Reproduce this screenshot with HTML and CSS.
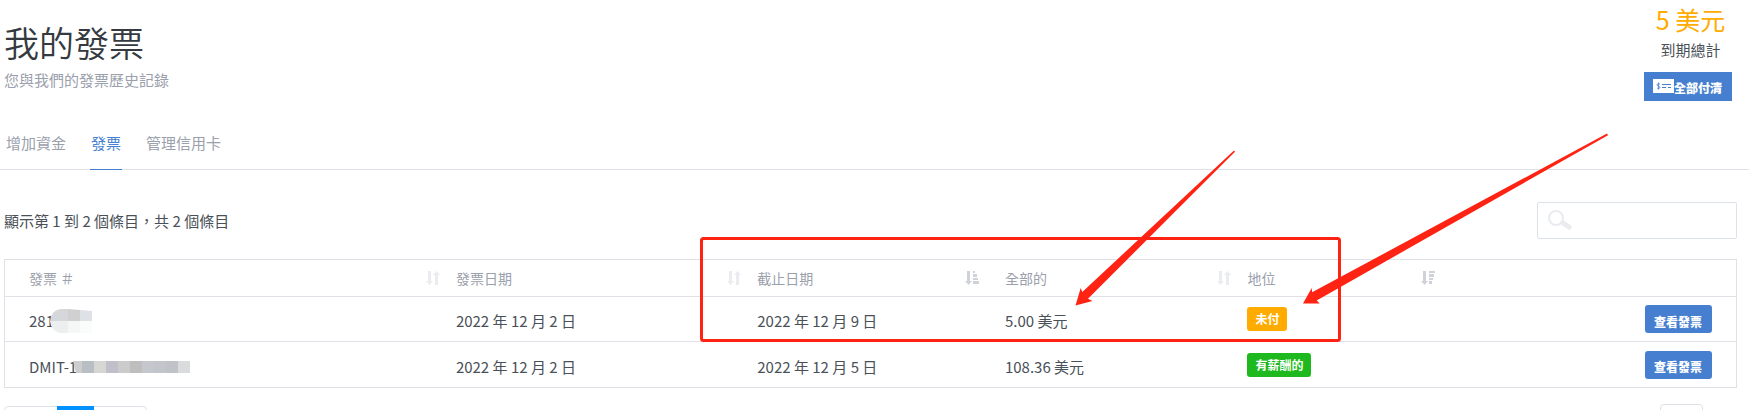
FILE: index.html
```
<!DOCTYPE html>
<html lang="zh-Hant">

<head>
    <meta charset="utf-8">
    <title>我的發票</title>
    <link rel="stylesheet" href="styles.css">
</head>

<body>
    <!-- shared icons -->
    <svg class="sprite" width="0" height="0">
        <symbol id="sort" viewBox="0 0 14 14">
            <path d="M2 0h3v10h2l-3.500 4L0 10h2zM9 14h3V4h2l-3.500-4L7 4h2z" />
        </symbol>
        <symbol id="sort-asc" viewBox="0 0 14 14">
            <path d="M2 0h3v10h2l-3.500 4L0 10h2zM8 0h2v2H8zM8 3h4v3H8zM8 7h5v2H8zM8 10h6v3H8z" />
        </symbol>
        <symbol id="sort-desc" viewBox="0 0 14 14">
            <path d="M2 0h3v10h2l-3.500 4L0 10h2zM8 0h6v2H8zM8 3h5v3H8zM8 7h4v2H8zM8 10h3v3H8z" />
        </symbol>
    </svg>

    <header class="header">
        <div class="heading">
            <h1>我的發票</h1>
            <p>您與我們的發票歷史記錄</p>
        </div>
        <div class="balance">
            <div class="amount">5 美元</div>
            <div class="amount-label">到期總計</div>
            <button class="pay-button" type="button">
                <svg width="21" height="14" viewBox="0 0 21 14">
                    <path fill="#fff" d="M0 0h21v14H0z" />
                    <path fill="none" stroke="#467fd0" stroke-width=".8" d="M7 5.300C6 4.300 4 4.500 4 6S7 7 7 8.300 5 10 4 8.900M5.500 3.500v7" />
                    <path fill="none" stroke="#467fd0" d="M9 5.500h9M9 8.500h4M15 8.500h3" />
                </svg>全部付清
            </button>
        </div>
    </header>

    <nav class="tabs">
        <a href="#">增加資金</a>
        <a href="#" class="active">發票</a>
        <a href="#">管理信用卡</a>
    </nav>

    <main class="content">
        <div class="toolbar">
            <div>顯示第 1 到 2 個條目，共 2 個條目</div>
            <div class="search">
                <svg width="26" height="22" viewBox="0 0 26 22">
                    <circle cx="9" cy="9" r="7" />
                    <path d="M16 14l6 4" />
                </svg>
                <input type="text" aria-label="搜尋">
            </div>
        </div>

        <table class="invoices">
            <thead>
                <tr>
                    <th class="col-id"><div class="th">發票 ＃<svg><use href="#sort" /></svg></div></th>
                    <th class="col-date"><div class="th">發票日期<svg><use href="#sort" /></svg></div></th>
                    <th class="col-due"><div class="th">截止日期<svg class="sorted"><use href="#sort-asc" /></svg></div></th>
                    <th class="col-total"><div class="th">全部的<svg><use href="#sort" /></svg></div></th>
                    <th class="col-status"><div class="th">地位<svg class="sorted"><use href="#sort-desc" /></svg></div></th>
                    <th></th>
                </tr>
            </thead>
            <tbody>
                <tr>
                    <td>
                        <div class="number">281<svg width="42" height="24" viewBox="0 0 42 24">
                            <path fill="#d5d7da" d="M0 12Q2 0 12 0h6v12z" />
                            <path fill="#d0d0d1" d="M18 0l12 1v11H18z" />
                            <path fill="#dee1e5" d="M30 1l12 1v10H30z" />
                            <path fill="#eceeef" d="M0 12h18v12h-6Q2 24 0 12z" />
                            <path fill="#f5f7f7" d="M18 12h12v12H18z" />
                            <path fill="#fafbfb" d="M30 12h12v12H30z" />
                        </svg></div>
                    </td>
                    <td>2022 年 12 月 2 日</td>
                    <td>2022 年 12 月 9 日</td>
                    <td>5.00 美元</td>
                    <td class="middle"><span class="badge unpaid">未付</span></td>
                    <td class="middle action"><button class="view-button" type="button">查看發票</button></td>
                </tr>
                <tr>
                    <td>
                        <div class="number">DMIT-1<svg width="117" height="12" viewBox="0 0 117 12">
                            <path fill="#cdcdce" d="M0 0h9v12H3z" />
                            <path fill="#b9bec5" d="M9 0h12v12H9z" />
                            <path fill="#d6d7d3" d="M21 0h12v12H21z" />
                            <path fill="#bfc0c9" d="M33 0h12v12H33z" />
                            <path fill="#cbcbcc" d="M45 0h12v12H45z" />
                            <path fill="#bebebf" d="M57 0h12v12H57z" />
                            <path fill="#c4c8ce" d="M69 0h12v12H69z" />
                            <path fill="#c2c5c9" d="M81 0h12v12H81z" />
                            <path fill="#bfc3c7" d="M93 0h12v12H93z" />
                            <path fill="#dadbdd" d="M105 0h12v12h-12z" />
                        </svg></div>
                    </td>
                    <td>2022 年 12 月 2 日</td>
                    <td>2022 年 12 月 5 日</td>
                    <td>108.36 美元</td>
                    <td class="middle"><span class="badge paid">有薪酬的</span></td>
                    <td class="middle action"><button class="view-button" type="button">查看發票</button></td>
                </tr>
            </tbody>
        </table>

        <div class="footer">
            <div class="pages">
                <button type="button" aria-label="上一頁"></button>
                <button type="button" class="current" aria-label="第 1 頁"></button>
                <button type="button" aria-label="下一頁"></button>
            </div>
            <select class="page-size" aria-label="每頁條目"></select>
        </div>
    </main>

    <!-- red markup over the table -->
    <svg class="markup" width="1749" height="410" viewBox="0 0 1749 410">
        <rect x="701.5" y="238.5" width="638" height="102" rx="2" />
        <path d="M1075.500 305.500L1080.700 288l1.600 4L1234 150.500l1 1.300L1088 298.700l4.500 2.200z" />
        <path d="M1303 303.500l8.700-15.500.4 4.300L1607 133.500l1 1.700-291.300 165.300 3 3z" />
    </svg>
</body>

</html>
```
FILE: styles.css
```
* {
    box-sizing: border-box;
}

body {
    margin: 0;
    height: 100vh;
    overflow: hidden;
    position: relative;
    background-color: #fff;
    color: #495057;
    font-family: "Noto Sans CJK TC", sans-serif;
    font-size: 15px;
    line-height: 22px;
}

button,
input,
select {
    font-family: inherit;
}

.sprite {
    position: absolute;
}

/* Page heading and balance */
.header {
    display: flex;
    justify-content: space-between;
    align-items: flex-start;
    padding: 5px 17px 0 4px;
}

.heading {
    padding-top: 17px;
}

h1 {
    margin: 0 0 7px;
    color: #343a40;
    font-size: 35px;
    font-weight: 350;
    line-height: 40px;
}

.heading p {
    margin: 0;
    color: #9aa0ac;
}

.balance {
    text-align: center;
}

.amount,
.amount-label {
    padding-left: 5px;
}

.amount {
    margin-bottom: 6px;
    color: #ffab00;
    font-size: 25px;
    line-height: 28px;
}

.pay-button {
    display: flex;
    align-items: center;
    height: 29px;
    margin-top: 11px;
    padding: 2px 10px 0 9px;
    border: none;
    background-color: #467fd0;
    color: #fff;
    font-size: 12px;
    font-weight: 900;
}

.pay-button svg {
    margin-bottom: 4px;
}

/* Tabs */
.tabs {
    display: flex;
    gap: 23px;
    margin-top: 31px;
    padding-left: 5px;
    border-bottom: 1px solid #dee2e6;
}

.tabs a {
    margin-bottom: -1px;
    padding: 0 1px 15px;
    border-bottom: 1px solid transparent;
    color: #9aa0ac;
    text-decoration: none;
}

.tabs a.active {
    border-color: #467fd0;
    color: #467fd0;
}

.content {
    padding: 32px 12px 0 4px;
}

.toolbar {
    display: flex;
    justify-content: space-between;
    align-items: center;
    margin-bottom: 20px;
}

.search {
    display: flex;
    align-items: center;
    width: 200px;
    height: 37px;
    padding-left: 9px;
    border: 1px solid #dde1ea;
    border-radius: 2px;
}

.search svg {
    flex: none;
    margin-bottom: 2px;
    fill: none;
    stroke: #e9ebee;
    stroke-width: 2;
}

.search path {
    stroke-width: 5;
    stroke-linecap: round;
}

.search input {
    width: 100%;
    border: none;
    outline: none;
    background: none;
}

/* Invoice table */
.invoices {
    width: 100%;
    table-layout: fixed;
    border-collapse: collapse;
    border: 1px solid #dee2e6;
}

.invoices tr {
    height: 45px;
    border-bottom: 1px solid #dee2e6;
}

.invoices thead tr {
    height: 37px;
}

.invoices tbody tr:last-child {
    height: 46px;
}

.invoices th {
    padding: 0 8px;
    color: #9aa0ac;
    font-size: 14px;
    font-weight: 400;
}

.invoices td {
    padding: 4px 8px 0;
}

.invoices th:first-child,
.invoices td:first-child {
    padding-left: 24px;
}

.invoices th.col-due {
    padding-right: 18px;
}

.invoices td.middle {
    padding-top: 0;
}

.invoices td.action {
    padding-right: 24px;
    text-align: right;
}

.col-id {
    width: 25.6%;
}

.col-date {
    width: 17.4%;
}

.col-due {
    width: 14.3%;
}

.col-total {
    width: 14%;
}

.col-status {
    width: 12%;
}

.invoices th.col-status {
    padding-right: 12px;
}

.th {
    display: flex;
    justify-content: space-between;
    align-items: center;
}

.th svg {
    width: 14px;
    height: 14px;
    fill: #ebecef;
}

.th svg.sorted {
    fill: #cfd2d9;
}

.number {
    display: flex;
    align-items: center;
}

.number svg {
    margin-left: -4px;
}

.badge {
    display: block;
    width: max-content;
    padding: 1px 8px;
    border-radius: 3px;
    color: #fff;
    font-size: 12px;
    font-weight: 700;
}

.unpaid {
    background-color: #ffab00;
}

.paid {
    background-color: #1eb91e;
}

.view-button {
    display: block;
    height: 28px;
    margin-left: auto;
    padding: 4px 10px 0 9px;
    border: none;
    border-radius: 3px;
    background-color: #467fd0;
    color: #fff;
    font-size: 12px;
    font-weight: 900;
}

/* Pagination */
.footer {
    display: flex;
    justify-content: space-between;
    align-items: flex-start;
    padding: 16px 34px 0 0;
}

.pages {
    display: flex;
    margin-top: 2px;
    border: 1px solid #dee2e6;
    border-radius: 4px;
}

.pages button {
    width: 52px;
    height: 36px;
    border: none;
    background: none;
}

.pages .current {
    width: 37px;
    margin-top: -1px;
    background-color: #0090ff;
}

.page-size {
    width: 43px;
    height: 36px;
    border: 1px solid #dee2e6;
    border-radius: 4px;
    background-color: #fff;
    appearance: none;
}

.markup {
    position: absolute;
    top: 0;
    left: 0;
    fill: #ff2314;
    pointer-events: none;
}

.markup rect {
    fill: none;
    stroke: #ff2314;
    stroke-width: 3;
}
```
